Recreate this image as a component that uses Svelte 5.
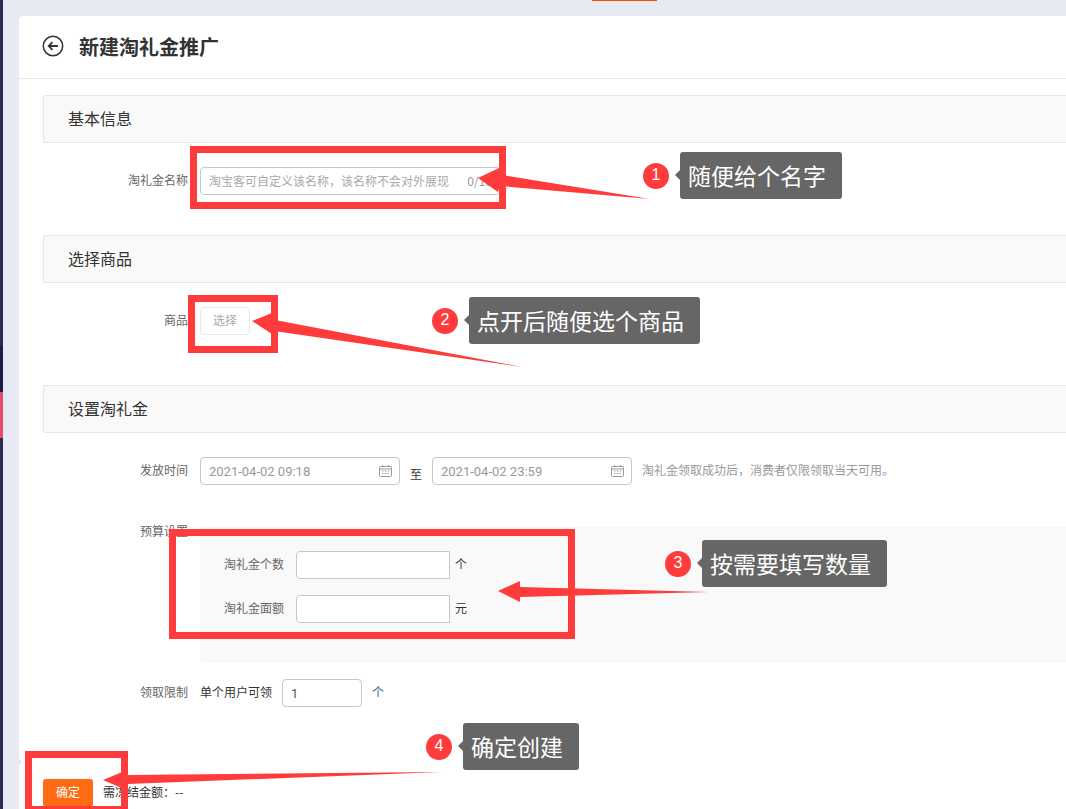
<script>
	const boxes = [
		{ x: 193.5, y: 149.5, w: 309, h: 56 },
		{ x: 191.5, y: 298.5, w: 83, h: 51 },
		{ x: 172.5, y: 532.5, w: 399, h: 103 },
		{ x: 28.5, y: 754.5, w: 96, h: 55 }
	];

	const arrows = [
		'478,178 499,168 502,175 650,199 500,186 498,192',
		'252,321 272,313 275,320 522,367 274,331 272,334',
		'498,591 520,581 520,587 709,592 520,597 520,602',
		'103,780 127,770 128,775 442,772 128,784 126,790'
	];

	const notes = [
		{ n: 1, text: '随便给个名字', x: 643, y: 152 },
		{ n: 2, text: '点开后随便选个商品', x: 432, y: 297 },
		{ n: 3, text: '按需要填写数量', x: 665, y: 540 },
		{ n: 4, text: '确定创建', x: 426, y: 723 }
	];
</script>

{#snippet calendar()}
	<svg class="cal" width="13" height="12" viewBox="0 0 13 12" fill="none" stroke="#999" stroke-width="1">
		<rect x="0.5" y="1.5" width="12" height="10" rx="1"></rect>
		<line x1="0.5" y1="4" x2="12.5" y2="4"></line>
		<line x1="3.5" y1="0" x2="3.5" y2="2"></line>
		<line x1="9.5" y1="0" x2="9.5" y2="2"></line>
		<path d="M3 6h1.5M5.8 6h1.5M8.6 6h1.5M3 8.5h1.5M5.8 8.5h1.5M8.6 8.5h1.5"></path>
	</svg>
{/snippet}

<div class="page">
	<aside class="rail">
		<div class="rail-a"></div>
		<div class="rail-b"></div>
		<div class="rail-c"></div>
		<div class="rail-d"></div>
	</aside>

	<div class="content">
		<div class="top-strip"><span class="tab-mark"></span></div>

		<main class="card">
			<span class="notch"></span>
			<header class="card-head">
				<svg width="22" height="22" viewBox="0 0 22 22" fill="none" stroke="#333" stroke-width="1.5">
					<circle cx="11" cy="11" r="9.7"></circle>
					<path d="M16 11H7M10.5 7.2 6.7 11l3.8 3.8" stroke-width="1.8"></path>
				</svg>
				<h1>新建淘礼金推广</h1>
			</header>

			<div class="card-body">
				<section class="block-name">
					<h2 class="section-head">基本信息</h2>
					<div class="field">
						<span class="label">淘礼金名称</span>
						<div class="input name-input">
							<input placeholder="淘宝客可自定义该名称，该名称不会对外展现" />
							<span class="count">0/10</span>
						</div>
					</div>
				</section>

				<section class="block-goods">
					<h2 class="section-head">选择商品</h2>
					<div class="field">
						<span class="label">商品</span>
						<button class="pick">选择</button>
					</div>
				</section>

				<section>
					<h2 class="section-head">设置淘礼金</h2>
					<div class="field">
						<span class="label">发放时间</span>
						<div class="input date-input">
							<input class="num-text" value="2021-04-02 09:18" />
							{@render calendar()}
						</div>
						<span class="to">至</span>
						<div class="input date-input">
							<input class="num-text" value="2021-04-02 23:59" />
							{@render calendar()}
						</div>
						<span class="hint">淘礼金领取成功后，消费者仅限领取当天可用。</span>
					</div>

					<div class="field budget">
						<span class="label budget-title">预算设置</span>
						<div class="budget-box">
							<div class="budget-row">
								<span class="budget-label">淘礼金个数</span>
								<div class="input budget-input"><input /></div>
								<span class="unit">个</span>
							</div>
							<div class="budget-row">
								<span class="budget-label">淘礼金面额</span>
								<div class="input budget-input"><input /></div>
								<span class="unit">元</span>
							</div>
						</div>
					</div>

					<div class="field limit">
						<span class="label">领取限制</span>
						<span class="limit-text">单个用户可领</span>
						<div class="input limit-input"><input class="num-text dark" value="1" /></div>
						<span class="limit-unit">个</span>
					</div>
				</section>

				<footer class="actions">
					<button class="submit">确定</button>
					<span class="amount">需冻结金额：--</span>
				</footer>
			</div>
		</main>
	</div>

	<svg class="marks" width="1066" height="809" viewBox="0 0 1066 809">
		{#each boxes as b}
			<rect x={b.x} y={b.y} width={b.w} height={b.h} fill="none" stroke="#ff3b3b" stroke-width="7"></rect>
		{/each}
		{#each arrows as points}
			<polygon {points} fill="#ff3b3b"></polygon>
		{/each}
	</svg>

	{#each notes as note}
		<div class="note" style="left: {note.x}px; top: {note.y}px">
			<span class="num">{note.n}</span>
			<span class="bubble">{note.text}</span>
		</div>
	{/each}
</div>

<style>
	:global(body) {
		background: #e7eaf3;
	}

	.page {
		position: relative;
		display: flex;
		width: 1066px;
		height: 809px;
		overflow: hidden;
		font-family: "Noto Sans CJK SC", "Liberation Sans", sans-serif;
		font-size: 12px;
		color: #333;
	}

	.rail {
		flex: none;
		display: flex;
		flex-direction: column;
		width: 3px;
	}

	.rail-a {
		height: 346px;
		background: #2b2a50;
	}

	.rail-b {
		height: 46px;
		background: #1a1c4a;
	}

	.rail-c {
		height: 46px;
		background: #e8486a;
	}

	.rail-d {
		flex: 1;
		background: #2b2a50;
	}

	.content {
		flex: none;
		width: 1100px;
		margin-left: 16px;
	}

	.top-strip {
		height: 16px;
	}

	.tab-mark {
		display: block;
		width: 65px;
		height: 1px;
		margin-left: 573px;
		background: #ff4c00;
	}

	.card {
		position: relative;
		height: 793px;
		background: #fff;
		border-radius: 4px 0 0 0;
	}

	.notch {
		position: absolute;
		left: 0;
		top: 743px;
		border-style: solid;
		border-width: 3px 0 3px 3px;
		border-color: transparent transparent transparent #e7eaf3;
	}

	.card-head {
		box-sizing: border-box;
		display: flex;
		align-items: center;
		gap: 15px;
		height: 63px;
		padding: 0 0 2px 23px;
		border-bottom: 1px solid #e6e6e6;
	}

	h1 {
		margin: 0;
		font-size: 20px;
		font-weight: 700;
		color: #333;
	}

	.card-body {
		padding: 16px 0 0 24px;
	}

	.section-head {
		box-sizing: border-box;
		height: 48px;
		margin: 0;
		padding-left: 24px;
		font-size: 16px;
		font-weight: 400;
		line-height: 44px;
		color: #333;
		background: #f9f9f9;
		border: 1px solid #e6e6e6;
		border-radius: 2px;
	}

	.block-name {
		margin-bottom: 40px;
	}

	.block-goods {
		margin-bottom: 50px;
	}

	.field {
		display: flex;
		align-items: center;
		margin-top: 24px;
	}

	.label {
		flex: none;
		width: 145px;
		margin-right: 12px;
		padding-bottom: 3px;
		text-align: right;
		color: #666;
	}

	.input {
		box-sizing: border-box;
		display: flex;
		align-items: center;
		height: 28px;
		padding: 0 8px;
		background: #fff;
		border: 1px solid #c4c6cf;
		border-radius: 4px;
	}

	input {
		flex: 1;
		min-width: 0;
		padding: 0 0 2px;
		border: none;
		outline: none;
		background: none;
		font: inherit;
		color: #999;
	}

	input.num-text {
		padding-bottom: 0;
		font-family: Roboto, "Liberation Sans", sans-serif;
		font-size: 13px;
	}

	input.dark {
		color: #555;
	}

	input::placeholder {
		color: #aaa;
	}

	.name-input {
		width: 300px;
	}

	.count {
		flex: none;
		margin-right: -1px;
		padding-bottom: 2px;
		color: #999;
	}

	.pick {
		box-sizing: border-box;
		width: 50px;
		height: 28px;
		padding: 0 0 3px;
		background: #fff;
		border: 1px solid #e6e7eb;
		border-radius: 4px;
		font: inherit;
		color: #aaa;
	}

	.date-input {
		width: 200px;
	}

	.cal {
		flex: none;
		margin-right: -1px;
	}

	.to {
		width: 32px;
		padding-top: 4px;
		text-align: center;
	}

	.hint {
		margin-left: 10px;
		padding-bottom: 3px;
		color: #999;
	}

	.budget {
		align-items: flex-start;
		margin-top: 42px;
	}

	.budget-title {
		margin-top: -5px;
	}

	.budget-box {
		flex: 1;
		box-sizing: border-box;
		height: 136px;
		padding-top: 24px;
		background: #f9f9f9;
		border-radius: 2px;
	}

	.budget-row {
		display: flex;
		align-items: center;
		margin-bottom: 16px;
	}

	.budget-label {
		width: 84px;
		margin-right: 12px;
		padding-bottom: 3px;
		text-align: right;
		color: #666;
	}

	.budget-input {
		width: 154px;
		border-radius: 4px 0 0 4px;
	}

	.unit {
		margin-left: 5px;
		padding-bottom: 3px;
	}

	.limit {
		margin-top: 16px;
	}

	.limit-text {
		margin-right: 10px;
		padding-bottom: 4px;
	}

	.limit-input {
		width: 80px;
	}

	.limit-unit {
		margin-left: 10px;
		padding-bottom: 4px;
		color: #2b6a94;
	}

	.actions {
		display: flex;
		align-items: center;
		gap: 10px;
		margin-top: 72px;
	}

	.amount {
		padding-bottom: 3px;
	}

	.submit {
		width: 50px;
		height: 28px;
		padding: 0 0 3px;
		border: none;
		border-radius: 3px;
		background: #ff6a13;
		font: inherit;
		color: #fff;
	}

	.marks {
		position: absolute;
		left: 0;
		top: 0;
		pointer-events: none;
	}

	.note {
		position: absolute;
		display: flex;
		align-items: center;
	}

	.num {
		flex: none;
		box-sizing: border-box;
		display: flex;
		align-items: center;
		justify-content: center;
		width: 26px;
		height: 26px;
		margin-right: 11px;
		padding-bottom: 2px;
		border-radius: 50%;
		background: #ff3b3b;
		font-family: "Liberation Sans", sans-serif;
		font-size: 16px;
		color: #fff;
	}

	.bubble {
		box-sizing: border-box;
		position: relative;
		display: flex;
		align-items: center;
		height: 47px;
		padding: 0 16px 2px 8px;
		border-radius: 3px;
		background: #666;
		font-size: 23px;
		color: #fff;
	}

	.bubble::before {
		content: "";
		position: absolute;
		left: -5px;
		top: 18px;
		border-style: solid;
		border-width: 5px 5px 5px 0;
		border-color: transparent #666 transparent transparent;
	}
</style>
